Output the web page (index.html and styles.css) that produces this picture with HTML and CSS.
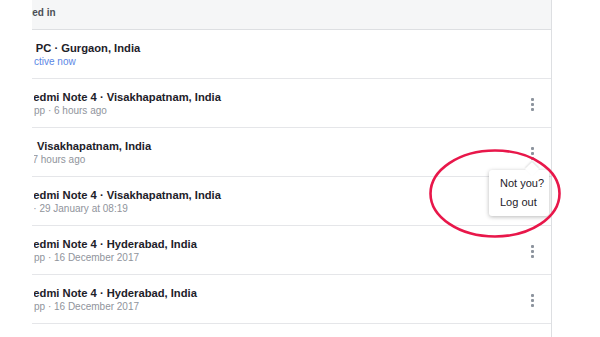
FILE: index.html
```html
<!DOCTYPE html>
<html>
<head>
<meta charset="utf-8">
<link rel="stylesheet" href="styles.css">
</head>
<body>
<div class="page">
  <div class="panel">
    <div class="header"><span class="head-text">Where you're logged in</span></div>
    <div class="row">
      <div class="info">
        <div class="title cut-pc">Windows PC · Gurgaon, India</div>
        <div class="sub active cut-a">Active now</div>
      </div>
    </div>
    <div class="row">
      <div class="info">
        <div class="title cut-r">Xiaomi Redmi Note 4 · Visakhapatnam, India</div>
        <div class="sub cut-a">App · 6 hours ago</div>
      </div>
      <div class="more"><i></i><i></i><i></i></div>
    </div>
    <div class="row">
      <div class="info">
        <div class="title cut-loc">Visakhapatnam, India</div>
        <div class="sub cut-17">17 hours ago</div>
      </div>
      <div class="more"><i></i><i></i><i></i></div>
      <div class="menu">
        <div class="menu-item">Not you?</div>
        <div class="menu-item">Log out</div>
      </div>
    </div>
    <div class="row">
      <div class="info">
        <div class="title cut-r">Xiaomi Redmi Note 4 · Visakhapatnam, India</div>
        <div class="sub cut-sep">App · 29 January at 08:19</div>
      </div>
      <div class="more"><i></i><i></i><i></i></div>
    </div>
    <div class="row">
      <div class="info">
        <div class="title cut-r">Xiaomi Redmi Note 4 · Hyderabad, India</div>
        <div class="sub cut-a">App · 16 December 2017</div>
      </div>
      <div class="more"><i></i><i></i><i></i></div>
    </div>
    <div class="row">
      <div class="info">
        <div class="title cut-r">Xiaomi Redmi Note 4 · Hyderabad, India</div>
        <div class="sub cut-a">App · 16 December 2017</div>
      </div>
      <div class="more"><i></i><i></i><i></i></div>
    </div>
  </div>
  <svg class="ring" width="134" height="91" viewBox="0 0 134 91">
    <ellipse cx="67" cy="45.5" rx="64.5" ry="43" fill="none" stroke="#e8174a" stroke-width="2.6"/>
  </svg>
</div>
</body>
</html>
```

FILE: styles.css
```css
html, body {
  margin: 0;
  padding: 0;
  background: #ffffff;
}
body {
  width: 600px;
  height: 337px;
  overflow: hidden;
  font-family: "Liberation Sans", Arial, Helvetica, sans-serif;
}
.page {
  position: relative;
  width: 600px;
  height: 337px;
}
.panel {
  margin-left: 32px;
  width: 519px;
  border-right: 1px solid #dddfe2;
  height: 337px;
}
.header {
  height: 22px;
  padding-top: 7px;
  background: #f5f6f7;
  border-bottom: 1px solid #dddfe2;
  overflow: hidden;
  white-space: nowrap;
}
.head-text {
  display: block;
  font-size: 10px;
  line-height: 12px;
  font-weight: bold;
  color: #4b4f56;
  margin-left: -86.6px;
}
.row {
  position: relative;
  height: 48px;
  border-bottom: 1px solid #e5e6e9;
  display: flex;
  align-items: center;
}
.info {
  flex: 1;
  margin-left: 1.5px;
  overflow: hidden;
  white-space: nowrap;
  padding-top: 1px;
}
.title {
  font-size: 11.2px;
  font-weight: bold;
  color: #1d2129;
  line-height: 14px;
}
.sub {
  font-size: 10px;
  color: #90949c;
  line-height: 14px;
}
.active {
  color: #5b86e5;
}
.cut-pc { margin-left: -49.8px; }
.cut-a { margin-left: -6.2px; }
.cut-r { margin-left: -48px; }
.cut-loc { margin-left: 3.5px; }
.cut-17 { margin-left: -6.6px; }
.cut-sep { margin-left: -20.8px; }
.more {
  width: 36px;
  display: flex;
  flex-direction: column;
  align-items: center;
  gap: 2px;
  margin-right: 1px;
  padding-top: 2px;
}
.more i {
  display: block;
  width: 3px;
  height: 3px;
  border-radius: 1px;
  background: #8d949e;
}
.menu {
  position: absolute;
  left: 457px;
  top: 42px;
  width: 60px;
  padding: 4px 0;
  background: #ffffff;
  border-radius: 3px;
  box-shadow: 0 1px 4px rgba(0, 0, 0, 0.28);
  z-index: 2;
}
.menu::before {
  content: "";
  position: absolute;
  right: 12px;
  top: -6px;
  width: 10px;
  height: 10px;
  background: #ffffff;
  transform: rotate(45deg);
  box-shadow: -1px -1px 2px rgba(0, 0, 0, 0.12);
}
.menu-item {
  position: relative;
  font-size: 11px;
  color: #1d2129;
  line-height: 19px;
  padding-left: 11px;
}
.ring {
  position: absolute;
  left: 428px;
  top: 148px;
  z-index: 3;
}
```
